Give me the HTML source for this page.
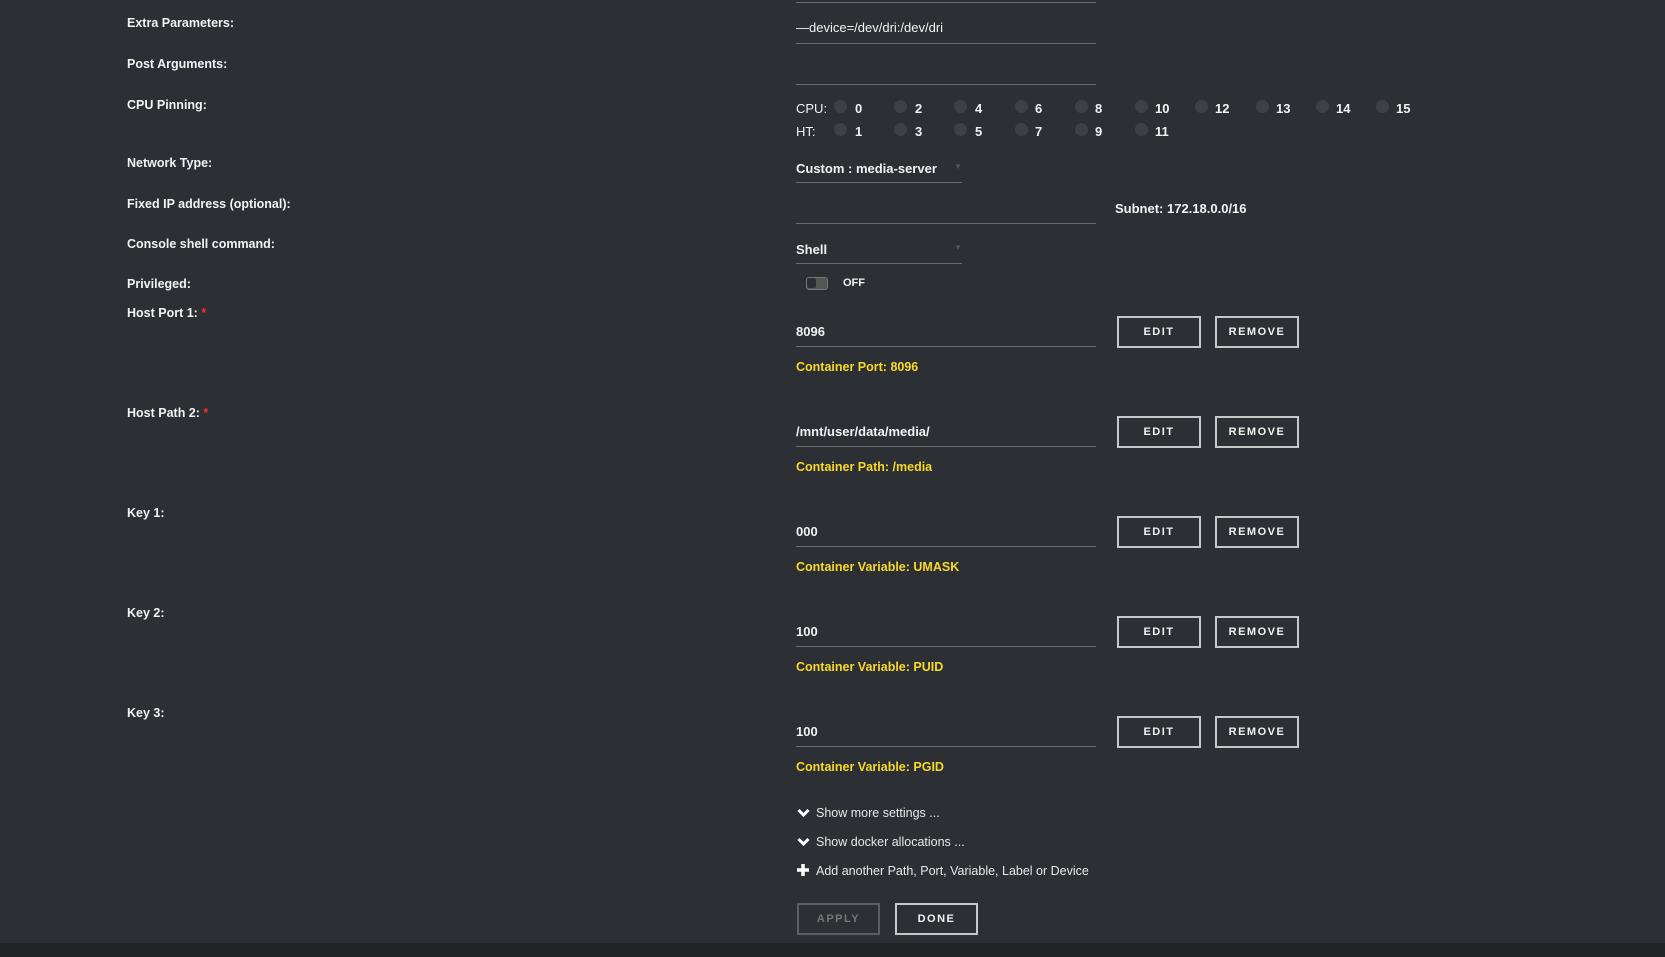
<!DOCTYPE html>
<html><head><meta charset="utf-8"><style>
*{margin:0;padding:0;box-sizing:border-box}
body{width:1665px;height:957px;background:#2c2f33;font-family:"Liberation Sans",sans-serif;color:#f2f2f2;position:relative;overflow:hidden}
.a{position:absolute;white-space:nowrap}
.l{font-size:12.5px;font-weight:bold;left:127px}
.v{font-size:13px;font-weight:bold;left:796px}
.ln{position:absolute;height:1px;background:#6a6d70}
.y{color:#f7d82c;font-size:12.5px;font-weight:bold;left:796px}
.btn{position:absolute;height:32px;border:2px solid #c8c8c8;font-size:11px;font-weight:bold;letter-spacing:1.5px;display:flex;align-items:center;justify-content:center;color:#f2f2f2}
.r{color:#e33}
.dot{position:absolute;width:13px;height:13px;border-radius:50%;background:#3d4145}
.n{font-size:13px;font-weight:bold}
.lk{font-size:12.5px;color:#e8e8e8;left:816px}
</style></head><body>
<div class="ln" style="left:796px;top:2px;width:300px"></div>
<div class="a l" style="top:16px">Extra Parameters:</div>
<div class="a v" style="top:20px;font-weight:normal">—device=/dev/dri:/dev/dri</div>
<div class="ln" style="left:796px;top:43px;width:300px"></div>
<div class="a l" style="top:57px">Post Arguments:</div>
<div class="ln" style="left:796px;top:84px;width:300px"></div>
<div class="a l" style="top:98px">CPU Pinning:</div>
<div class="a n" style="left:796px;top:101px;font-weight:normal">CPU:</div>
<div class="a n" style="left:796px;top:124px;font-weight:normal">HT:</div>
<div class="a l" style="top:156px">Network Type:</div>
<div class="a v" style="top:161px">Custom : media-server</div>
<div class="a" style="left:954px;top:162px;font-size:8px;color:#555">▼</div>
<div class="ln" style="left:796px;top:182px;width:166px"></div>
<div class="a l" style="top:197px">Fixed IP address (optional):</div>
<div class="ln" style="left:796px;top:223px;width:300px"></div>
<div class="a n" style="left:1115px;top:201px">Subnet: 172.18.0.0/16</div>
<div class="a l" style="top:237px">Console shell command:</div>
<div class="a v" style="top:242px">Shell</div>
<div class="a" style="left:954px;top:243px;font-size:8px;color:#555">▼</div>
<div class="ln" style="left:796px;top:263px;width:166px"></div>
<div class="a l" style="top:277px">Privileged:</div>
<div class="a" style="left:806px;top:277px;width:22px;height:13px;border:1.5px solid #777;border-radius:3px;background:#555"><div style="width:9px;height:10px;background:#2c2f33;border-radius:2px"></div></div>
<div class="a" style="left:843px;top:277px;font-size:11px;font-weight:bold">OFF</div>

<div class="a l" style="top:306px">Host Port 1: <span class="r">*</span></div>
<div class="a v" style="top:324px">8096</div>
<div class="ln" style="left:796px;top:346px;width:300px"></div>
<div class="a y" style="top:360px">Container Port: 8096</div>
<div class="btn" style="left:1117px;top:316px;width:84px">EDIT</div>
<div class="btn" style="left:1215px;top:316px;width:84px">REMOVE</div>

<div class="a l" style="top:406px">Host Path 2: <span class="r">*</span></div>
<div class="a v" style="top:424px">/mnt/user/data/media/</div>
<div class="ln" style="left:796px;top:446px;width:300px"></div>
<div class="a y" style="top:460px">Container Path: /media</div>
<div class="btn" style="left:1117px;top:416px;width:84px">EDIT</div>
<div class="btn" style="left:1215px;top:416px;width:84px">REMOVE</div>

<div class="a l" style="top:506px">Key 1:</div>
<div class="a v" style="top:524px">000</div>
<div class="ln" style="left:796px;top:546px;width:300px"></div>
<div class="a y" style="top:560px">Container Variable: UMASK</div>
<div class="btn" style="left:1117px;top:516px;width:84px">EDIT</div>
<div class="btn" style="left:1215px;top:516px;width:84px">REMOVE</div>

<div class="a l" style="top:606px">Key 2:</div>
<div class="a v" style="top:624px">100</div>
<div class="ln" style="left:796px;top:646px;width:300px"></div>
<div class="a y" style="top:660px">Container Variable: PUID</div>
<div class="btn" style="left:1117px;top:616px;width:84px">EDIT</div>
<div class="btn" style="left:1215px;top:616px;width:84px">REMOVE</div>

<div class="a l" style="top:706px">Key 3:</div>
<div class="a v" style="top:724px">100</div>
<div class="ln" style="left:796px;top:746px;width:300px"></div>
<div class="a y" style="top:760px">Container Variable: PGID</div>
<div class="btn" style="left:1117px;top:716px;width:84px">EDIT</div>
<div class="btn" style="left:1215px;top:716px;width:84px">REMOVE</div>

<svg class="a" style="left:797px;top:808px" width="13" height="10" viewBox="0 0 13 10"><path d="M1.5 2 L6.5 7 L11.5 2" stroke="#fff" stroke-width="3" fill="none"/></svg>
<div class="a lk" style="top:806px">Show more settings ...</div>
<svg class="a" style="left:797px;top:837px" width="13" height="10" viewBox="0 0 13 10"><path d="M1.5 2 L6.5 7 L11.5 2" stroke="#fff" stroke-width="3" fill="none"/></svg>
<div class="a lk" style="top:835px">Show docker allocations ...</div>
<svg class="a" style="left:797px;top:864px" width="12" height="12" viewBox="0 0 12 12"><path d="M6 0V12M0 6H12" stroke="#fff" stroke-width="3.5"/></svg>
<div class="a lk" style="top:864px">Add another Path, Port, Variable, Label or Device</div>

<div class="btn" style="left:797px;top:903px;width:83px;border-color:#5b5f63;color:#777">APPLY</div>
<div class="btn" style="left:895px;top:903px;width:83px">DONE</div>
<div class="a" style="left:0;top:943px;width:1665px;height:14px;background:#222325"></div>

<div class="dot" style="left:834px;top:100px"></div><div class="a n" style="left:855px;top:101px">0</div>
<div class="dot" style="left:894px;top:100px"></div><div class="a n" style="left:915px;top:101px">2</div>
<div class="dot" style="left:954px;top:100px"></div><div class="a n" style="left:975px;top:101px">4</div>
<div class="dot" style="left:1015px;top:100px"></div><div class="a n" style="left:1035px;top:101px">6</div>
<div class="dot" style="left:1075px;top:100px"></div><div class="a n" style="left:1095px;top:101px">8</div>
<div class="dot" style="left:1135px;top:100px"></div><div class="a n" style="left:1155px;top:101px">10</div>
<div class="dot" style="left:1195px;top:100px"></div><div class="a n" style="left:1215px;top:101px">12</div>
<div class="dot" style="left:1256px;top:100px"></div><div class="a n" style="left:1276px;top:101px">13</div>
<div class="dot" style="left:1316px;top:100px"></div><div class="a n" style="left:1336px;top:101px">14</div>
<div class="dot" style="left:1376px;top:100px"></div><div class="a n" style="left:1396px;top:101px">15</div>
<div class="dot" style="left:834px;top:123px"></div><div class="a n" style="left:855px;top:124px">1</div>
<div class="dot" style="left:894px;top:123px"></div><div class="a n" style="left:915px;top:124px">3</div>
<div class="dot" style="left:954px;top:123px"></div><div class="a n" style="left:975px;top:124px">5</div>
<div class="dot" style="left:1015px;top:123px"></div><div class="a n" style="left:1035px;top:124px">7</div>
<div class="dot" style="left:1075px;top:123px"></div><div class="a n" style="left:1095px;top:124px">9</div>
<div class="dot" style="left:1135px;top:123px"></div><div class="a n" style="left:1155px;top:124px">11</div>
</body></html>
